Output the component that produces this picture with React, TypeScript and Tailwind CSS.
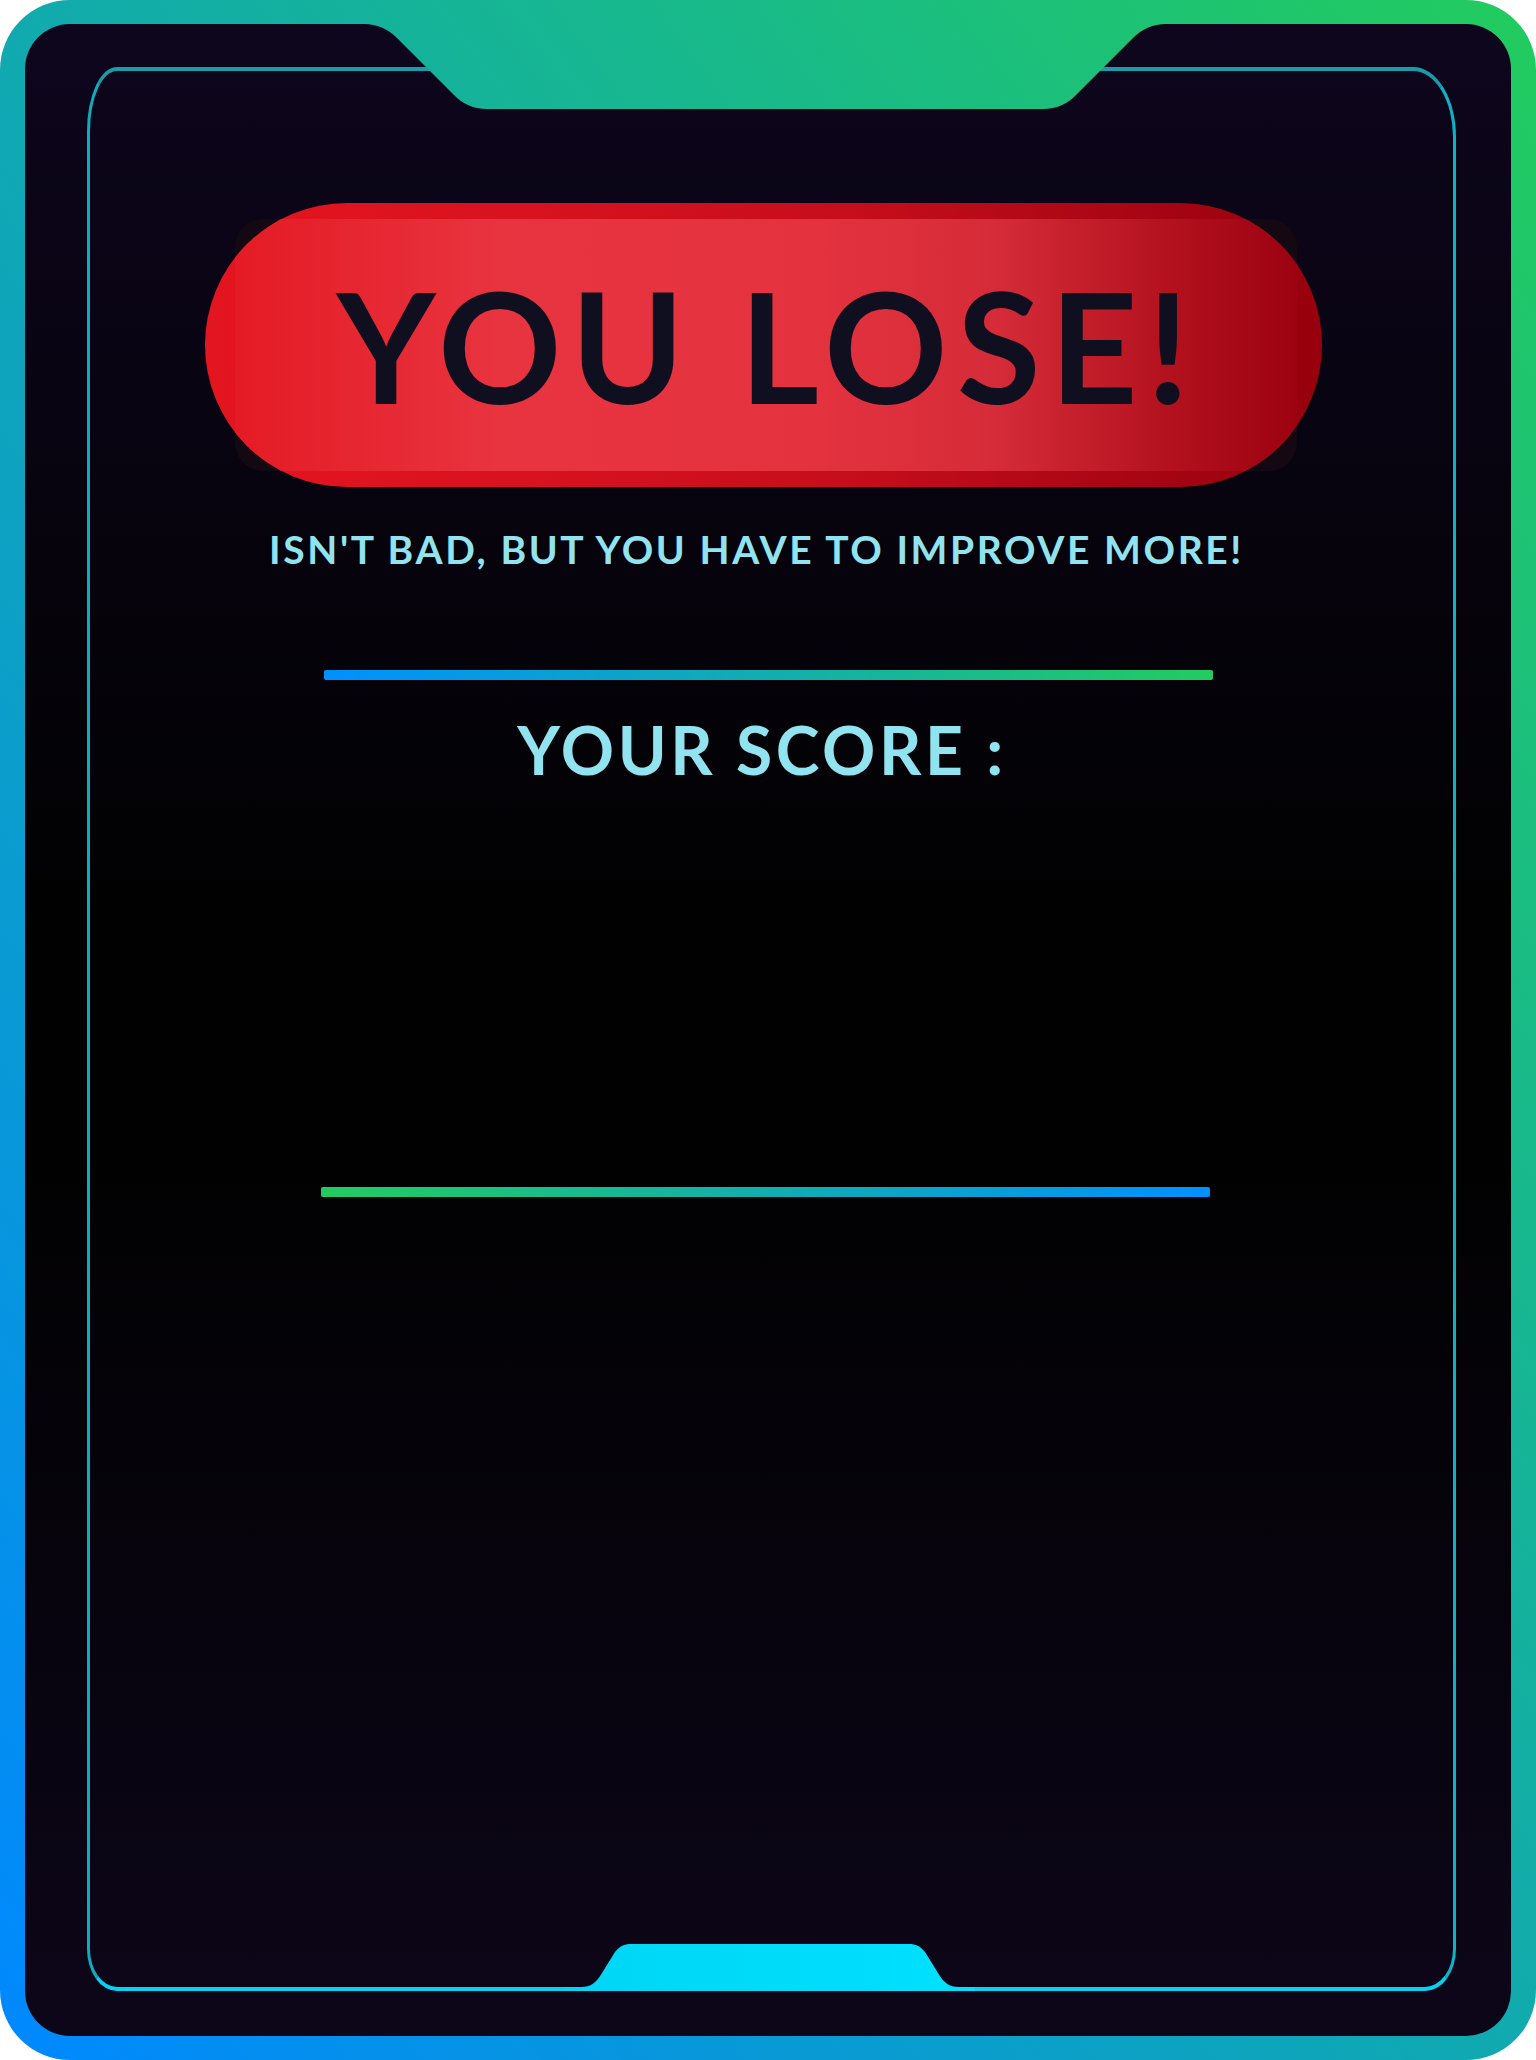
import React from "react";

// frame gradient vector in panel coords (panel sits at page 25,24)
function TopNotch() {
  return (
    <svg
      className="absolute left-0 top-0 overflow-visible"
      width="1486"
      height="90"
      viewBox="0 0 1486 90"
    >
      <defs>
        <linearGradient id="frameGrad" gradientUnits="userSpaceOnUse" x1="-244" y1="1742" x2="1730" y2="270">
          <stop offset="0" stopColor="#0088ff" />
          <stop offset="1" stopColor="#22cc5e" />
        </linearGradient>
      </defs>
      <path
        d="M336,-2 L339,0 Q358,0 372,14 L428,70 Q442,85 462,85 L1018,85 Q1038,85 1052,70 L1108,14 Q1122,0 1141,0 L1144,-2 Z"
        fill="url(#frameGrad)"
      />
    </svg>
  );
}

function BottomTab() {
  return (
    <svg
      className="absolute left-0 top-[1915px]"
      width="1486"
      height="55"
      viewBox="0 0 1486 55"
    >
      <defs>
        <linearGradient id="tabGrad" x1="0" y1="0" x2="1" y2="0">
          <stop offset="0" stopColor="#00d6f5" />
          <stop offset="1" stopColor="#00e0ff" />
        </linearGradient>
      </defs>
      <path
        d="M540,52 L540,48 L556,48 C566,48 571,44 577,34 L590,13 C595,7 599,5 606,5 L884,5 C891,5 895,7 900,13 L913,34 C919,44 924,48 934,48 L950,48 L950,52 Z"
        fill="url(#tabGrad)"
      />
    </svg>
  );
}

function LoseBanner() {
  return (
    <div className="relative ml-[115px] mt-[132px] h-[284px] w-[1117px] shrink-0">
      <div className="absolute left-[30px] top-[16px] h-[252px] w-[1062px] rounded-[28px] bg-[#140812]" />
      <div className="absolute inset-0 overflow-hidden rounded-full bg-[linear-gradient(to_right,#e3151f,#d8121f_30%,#c40d1b_60%,#a60513_85%,#97000c)]">
        <div className="absolute left-[30px] top-[16px] h-[252px] w-[1062px] rounded-[28px] bg-[linear-gradient(to_right,#e41b25,#e8343f_25%,#e4323f_55%,#d52b38_72%,#b3111e_88%,#9c0210)]" />
      </div>
      <div className="relative flex h-full items-center justify-center pl-[8px]">
        <span className="font-['Lato',sans-serif] text-[153px] font-bold leading-none tracking-[9px] text-[#0f0f1f]">
          YOU LOSE!
        </span>
      </div>
    </div>
  );
}

export default function App() {
  return (
    <div className="h-[2060px] w-[1536px] rounded-[70px] bg-[linear-gradient(to_top_right,#0088ff,#22cc5e)] px-[25px] py-[24px]">
      <div className="relative h-full rounded-[45px] bg-[linear-gradient(to_bottom,#0e061d,#010101_45%,#010101_55%,#0d0619)] pb-[45px] pl-[62px] pr-[55px] pt-[43px]">
        <div className="flex h-full flex-col rounded-[30px_43px_31px_30px/64px_70px_42px_42px] border-x-[3px] border-y-4 border-t-[#1a9ca8] border-b-[#00d4f2] border-l-[#10abbd] border-r-[#10b0c6]">
          <LoseBanner />

          <div className="mt-[43px] w-[1333px] text-center font-['Lato',sans-serif] text-[39px] font-bold leading-none tracking-[2.6px] text-[#92e3f0]">
            ISN'T BAD, BUT YOU HAVE TO IMPROVE MORE!
          </div>

          <div className="ml-[234px] mt-[101px] h-[10px] w-[889px] rounded-[2px] bg-[linear-gradient(to_right,#0090ff,#22cc5f)]" />

          <div className="mt-[37px] w-[1344px] text-center font-['Lato',sans-serif] text-[66px] font-bold leading-none tracking-[3.6px] text-[#92e3f0]">
            YOUR SCORE :
          </div>

          <div className="ml-[231px] mt-[404px] h-[10px] w-[889px] rounded-[2px] bg-[linear-gradient(to_right,#22cc5f,#0090ff)]" />
        </div>
        <TopNotch />
        <BottomTab />
      </div>
    </div>
  );
}
